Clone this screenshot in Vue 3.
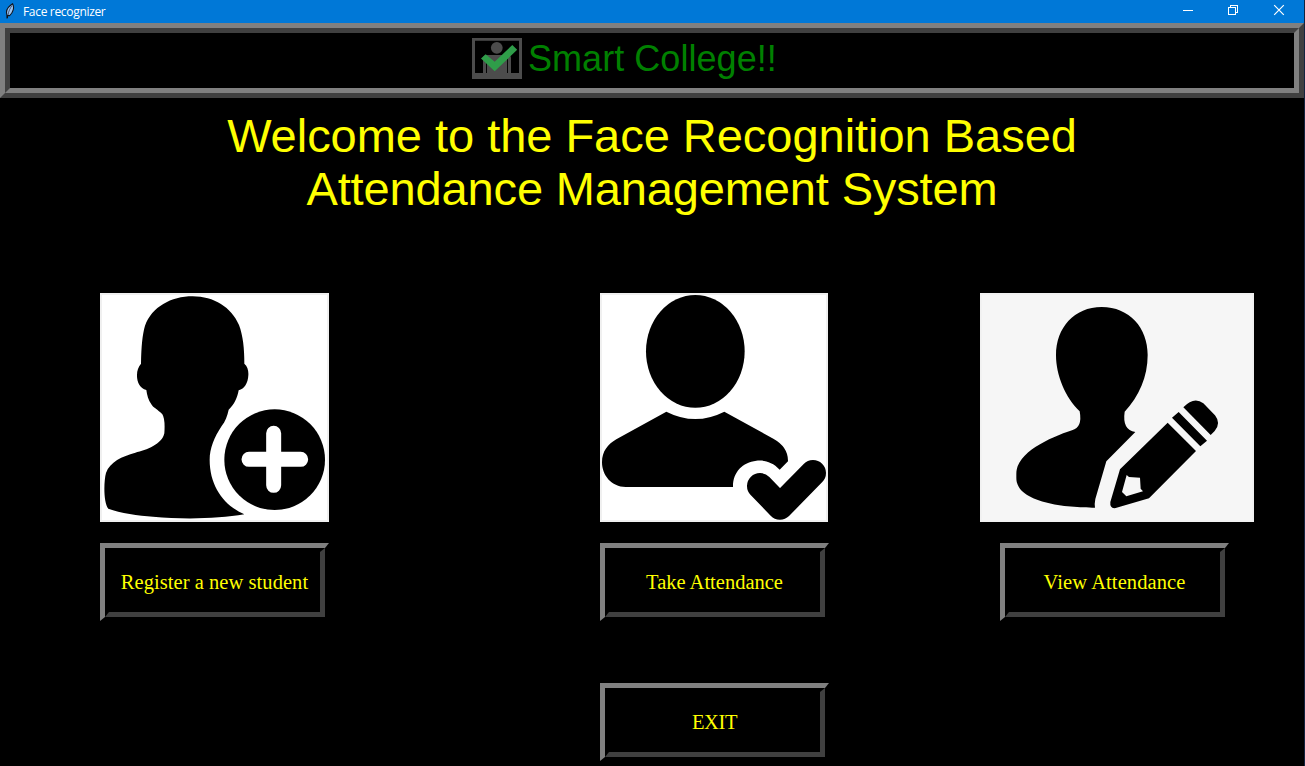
<script setup>
const actions = [
  { id: 'register', label: 'Register a new student' },
  { id: 'take', label: 'Take Attendance' },
  { id: 'view', label: 'View Attendance' },
]
</script>

<template>
  <div class="window">
    <header class="titlebar">
      <svg class="feather" width="10" height="16" viewBox="0 0 10 16">
        <path d="M2.2 15.4 C2 13.5 2.6 11.5 3.4 9.8" fill="none" stroke="#111" stroke-width="1.5" />
        <path d="M2.2 12.6 C.6 8.8 2.2 4.2 7.6 .8 C9.6 4.4 8.2 9.6 4.6 12.6 Z" fill="#9cc4f0" stroke="#10141c" stroke-width="1.1" />
        <path d="M3 12 C3.6 8 5.2 5 7 2.6" fill="none" stroke="#1b2b48" stroke-width=".7" />
      </svg>
      <span class="caption">Face recognizer</span>
      <div class="controls">
        <svg class="minimize" width="12" height="12" viewBox="0 0 12 12" shape-rendering="crispEdges"><path d="M1 6.5H11" stroke="#fff" /></svg>
        <svg width="12" height="12" viewBox="0 0 12 12" fill="none" stroke="#fff" shape-rendering="crispEdges"><path d="M1.5 3.5H8.5V10.5H1.5Z M3.5 3V1.5H10.5V8.5H9" /></svg>
        <svg width="12" height="12" viewBox="0 0 12 12"><path d="M1.2 1.2L10.8 10.8M10.8 1.2L1.2 10.8" stroke="#fff" stroke-width="1.2" /></svg>
      </div>
    </header>

    <div class="banner">
      <svg class="logo" width="50" height="41" viewBox="0 0 50 41">
        <path d="M0 0H50V41H0Z M3 2.7V35H47V2.7Z" fill="#4c4c4c" fill-rule="evenodd" />
        <circle cx="24.8" cy="9.8" r="5.9" fill="#4c4c4c" />
        <path d="M11 36V20Q11 17 15 17H35Q39 17 39 20V36Z" fill="#4c4c4c" />
        <path d="M14.5 22V35M35.5 20V35" stroke="#050505" />
        <path d="M9 20.5L13.7 16.2L22.7 23.8L40.3 7L45.2 11.8L22.7 33.2Z" fill="#2f9d49" />
      </svg>
      <span class="brand">Smart College!!</span>
    </div>

    <h1><span class="line-one">Welcome to the Face Recognition Based</span><br /><span class="line-two">Attendance Management System</span></h1>

    <main class="grid">
      <svg class="pic" width="229" height="229" viewBox="0 0 687 687">
        <rect width="687" height="687" fill="#f0f0f0" />
        <rect x="6" y="6" width="675" height="675" fill="#fff" />
        <path d="M123 212C124 160 127 126 135 98C156 42 213 10 278 10C342 10 394 43 417 96C429 128 433 166 433 212C443 221 446 233 445 247C444 270 433 288 416 292C412 314 404 333 386 350C382 368 376 386 365 399C343 432 329 466 329 500C329 580 372 637 433 664C356 677 252 680 159 671C116 668 60 660 25 647C10 629 11 565 18 540C30 506 66 490 106 479C140 471 186 454 193 421Q196 378 187 364C174 350 158 343 154 334C145 321 141 306 139 291C119 286 110 265 111 245C111 232 115 222 123 212Z" />
        <circle cx="524" cy="500" r="151" />
        <path d="M521 421V577M447 499H602" stroke="#fff" stroke-width="45" stroke-linecap="round" />
      </svg>
      <svg class="pic" width="228" height="229" viewBox="0 0 684 687">
        <rect width="684" height="687" fill="#f0f0f0" />
        <rect x="6" y="6" width="672" height="675" fill="#fff" />
        <ellipse cx="286" cy="175" rx="148" ry="169" />
        <path d="M199 356Q286 400 373 356L520 437Q565 462 564 505L539 530C517 505 490 501 469 503C427 508 398 538 399 582H79C35 583 6 547 6 508C6 475 24 453 49 439Z" />
        <path d="M480 579L540 641L639 540" fill="none" stroke="#000" stroke-width="78" stroke-linecap="round" stroke-linejoin="round" />
      </svg>
      <svg class="pic view-pic" width="274" height="229" viewBox="0 0 822 687">
        <rect width="822" height="687" fill="#f1f1f1" />
        <rect x="5" y="5" width="812" height="677" fill="#f6f6f6" />
        <path d="M365 42C448 42 503 104 503 186C503 252 477 310 434 356Q426 411 466 417L379 505L346 618Q343 633 345 644C262 644 109 631 109 555V542C109 479 209 434 276 412Q308 404 299 355C256 314 228 246 228 187C228 104 283 42 365 42Z" />
        <path d="M563 389L648 474L507 616L407 645Q389 648 391 627L420 529Z M596 357L681 443L661 460L576 374Z M610 343Q642 309 670 331L705 367Q724 391 704 414L692 426Z" />
        <path d="M440 546L447 552L480 554L482 587L489 595L439 610L426 597Z" fill="#f6f6f6" />
      </svg>
      <button v-for="a in actions" :key="a.id" :class="['bevel', a.id]" type="button">
        <span>{{ a.label }}</span>
      </button>
      <button class="bevel exit" type="button"><span>EXIT</span></button>
    </main>
  </div>
</template>

<style>
body { margin: 0; background: #000; overflow: hidden; }
</style>

<style scoped>
.window {
  box-sizing: border-box;
  width: 1305px;
  height: 766px;
  overflow: hidden;
  border-right: 1px solid #14233f;
  background: #000;
  font-kerning: none;
}
.titlebar {
  display: flex;
  align-items: flex-start;
  height: 23px;
  background: #0078d7;
  color: #fff;
}
.feather { margin: 3px 0 0 5px; }
.caption {
  margin-left: 8px;
  font: 12px/24px "Open Sans", sans-serif;
  letter-spacing: -0.32px;
  white-space: nowrap;
}
.controls { display: flex; gap: 34px; margin: 4px 19px 0 auto; }
.controls svg { display: block; }
.controls .minimize { margin-right: -1px; }
.banner {
  position: relative;
  box-sizing: border-box;
  display: flex;
  align-items: flex-start;
  height: 75px;
  padding: 10px 0 0 462px;
  border: 5px solid;
  border-color: #808080 #404040 #404040 #808080;
}
.banner::before {
  content: "";
  position: absolute;
  inset: 0;
  border: 5px solid;
  border-color: #404040 #808080 #808080 #404040;
}
.logo { margin-left: 5px; }
.brand {
  margin-left: 6px;
  font: 36px/41px "Liberation Sans", Arial, sans-serif;
  letter-spacing: 0.05px;
  color: #008000;
  white-space: nowrap;
}
h1 {
  margin: 11px 0 0;
  text-align: center;
  font: 47px/53px "Liberation Sans", Arial, sans-serif;
  color: #ff0;
}
.line-one { letter-spacing: -0.03px; }
.line-two { letter-spacing: -0.14px; }
.grid {
  display: grid;
  grid-template-columns: 500px 380px 20px 274px;
  grid-template-rows: 229px 78px 78px;
  margin: 78px 0 0 100px;
}
.pic { display: block; }
.view-pic { grid-column: 3 / 5; }
.bevel {
  display: flex;
  box-sizing: border-box;
  width: 229px;
  height: 78px;
  margin: 21px 0 0;
  padding: 0;
  border-style: solid;
  border-width: 5px 4px 4px 5px;
  border-color: #808080 #000 #000 #808080;
  background: #000;
}
.bevel span {
  box-sizing: border-box;
  width: 100%;
  height: 100%;
  border-style: solid;
  border-width: 4px 5px 5px 4px;
  border-color: #000 #404040 #404040 #000;
  font: 20.5px/60px "Liberation Serif", "Times New Roman", serif;
  color: #ff0;
  white-space: nowrap;
}
.register { grid-area: 2 / 1; }
.register span { letter-spacing: 0.05px; }
.take { grid-area: 2 / 2; }
.view { grid-area: 2 / 4; }
.view span { letter-spacing: 0.1px; }
.exit { grid-area: 3 / 2; margin-top: 83px; }
.exit span { letter-spacing: -0.4px; }
</style>
